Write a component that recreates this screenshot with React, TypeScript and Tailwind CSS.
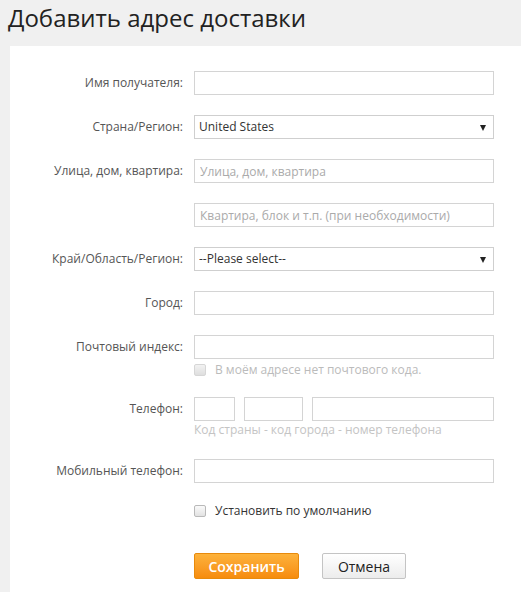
import React from 'react';

const font = { fontFamily: '"Open Sans", "Noto Sans", sans-serif' };

const Label: React.FC<{ text?: string }> = ({ text }) => (
  <div className="w-[184px] shrink-0 pr-[11px] text-right text-[12px] leading-[24px] text-[#555]">{text}</div>
);

const TextInput: React.FC<{ placeholder?: string; className?: string }> = ({ placeholder, className = 'w-[300px]' }) => (
  <input
    placeholder={placeholder}
    className={`${className} h-[24px] border border-[#d4d4d4] bg-white px-[5px] text-[12px] text-[#333] outline-none placeholder:text-[#aaa]`}
    style={font}
  />
);

const SelectBox: React.FC<{ value: string }> = ({ value }) => (
  <div className="relative h-[24px] w-[300px] border border-[#cfcfcf] bg-white">
    <div className="pl-[4px] text-[12px] leading-[22px] text-[#333]">{value}</div>
    <span className="absolute right-[7px] top-[9px] h-0 w-0 border-x-[3px] border-t-[6px] border-x-transparent border-t-[#222]" />
  </div>
);

const Checkbox: React.FC<{ faded?: boolean }> = ({ faded }) => (
  <span
    className={`inline-block h-[12px] w-[12px] shrink-0 rounded-[2px] border bg-gradient-to-b ${
      faded ? 'border-[#d6d6d6] from-[#f2f2f2] to-[#dedede]' : 'border-[#b9b9b9] from-[#fafafa] to-[#e2e2e2]'
    }`}
  />
);

const Row: React.FC<{ label?: string; children: React.ReactNode; className?: string }> = ({ label, children, className = 'mb-[20px]' }) => (
  <div className={`flex ${className}`}>
    <Label text={label} />
    <div className="flex flex-col">{children}</div>
  </div>
);

export default function App() {
  return (
    <div className="min-h-[592px] w-[521px] overflow-hidden bg-[#f0f0f0]" style={font}>
      <h1 className="h-[46px] pl-[8px] pt-[3px] text-[24px] leading-[30px] font-normal text-[#222]">Добавить адрес доставки</h1>
      <div className="ml-[10px] bg-white pt-[25px] pb-[20px]">
        <Row label="Имя получателя:">
          <TextInput />
        </Row>
        <Row label="Страна/Регион:">
          <SelectBox value="United States" />
        </Row>
        <Row label="Улица, дом, квартира:">
          <TextInput placeholder="Улица, дом, квартира" />
        </Row>
        <Row>
          <TextInput placeholder="Квартира, блок и т.п. (при необходимости)" />
        </Row>
        <Row label="Край/Область/Регион:">
          <SelectBox value="--Please select--" />
        </Row>
        <Row label="Город:">
          <TextInput />
        </Row>
        <Row label="Почтовый индекс:" className="mb-[19px]">
          <TextInput />
          <div className="mt-[3px] flex h-[16px] items-center gap-[9px] text-[12px] text-[#bbb]">
            <Checkbox faded />
            <span>В моём адресе нет почтового кода.</span>
          </div>
        </Row>
        <Row label="Телефон:" className="mb-[21px]">
          <div className="flex gap-[9px]">
            <TextInput className="w-[41px]" />
            <TextInput className="w-[59px]" />
            <TextInput className="w-[182px]" />
          </div>
          <div className="mt-[1px] h-[16px] text-[12px] leading-[16px] text-[#c4c4c4]">Код страны - код города - номер телефона</div>
        </Row>
        <Row label="Мобильный телефон:">
          <TextInput />
        </Row>
        <Row className="mb-[34px]">
          <div className="flex h-[16px] items-center gap-[9px] text-[12px] text-[#333]">
            <Checkbox />
            <span>Установить по умолчанию</span>
          </div>
        </Row>
        <Row className="">
          <div className="flex gap-[23px]">
            <button className="h-[26px] w-[105px] rounded-[2px] border border-[#e88a0c] bg-gradient-to-b from-[#fdb23a] to-[#f68c0b] text-[14px] font-semibold text-white">
              Сохранить
            </button>
            <button className="h-[26px] w-[84px] rounded-[2px] border border-[#c4c4c4] bg-gradient-to-b from-white to-[#ececec] text-[14px] text-[#222]">
              Отмена
            </button>
          </div>
        </Row>
      </div>
    </div>
  );
}
